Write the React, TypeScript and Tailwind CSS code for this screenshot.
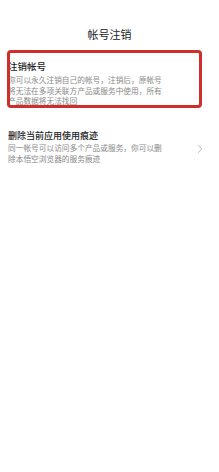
import { ChevronRight } from "lucide-react";

const font = { fontFamily: '"Noto Sans CJK SC", "Noto Sans", sans-serif' };

export default function App() {
  return (
    <div className="relative min-h-[472px] w-[219px] bg-white" style={font}>
      {/* Header */}
      <div className="pt-[28px] text-center text-[11px] leading-[12px] text-[#222]">帐号注销</div>

      {/* 注销帐号 */}
      <div className="mt-[20px] pl-[8px]">
        <div className="text-[9.5px] font-medium leading-[12px] text-[#222]">注销帐号</div>
        <p className="mt-[3px] w-[160px] text-[7.7px] leading-[10.5px] text-[#888]">
          你可以永久注销自己的帐号，注销后，原帐号将无法在多项关联方产品或服务中使用，所有产品数据将无法找回
        </p>
      </div>

      {/* 删除当前应用使用痕迹 */}
      <div className="mt-[23px] flex items-start pl-[8px] pr-[12px]">
        <div className="flex-1">
          <div className="text-[9px] font-medium leading-[12px] text-[#222]">删除当前应用使用痕迹</div>
          <p className="w-[160px] text-[7.7px] leading-[11.5px] text-[#888]">
            同一帐号可以访问多个产品或服务，你可以删除本悟空浏览器的服务痕迹
          </p>
        </div>
        <ChevronRight size={14} strokeWidth={1.2} className="mt-[12px] text-[#999]" />
      </div>

      {/* Annotation box */}
      <div className="absolute left-[7px] top-[50px] h-[58px] w-[195px] rounded-[4px] border-[3px] border-[#cf2f2b]" />
    </div>
  );
}
